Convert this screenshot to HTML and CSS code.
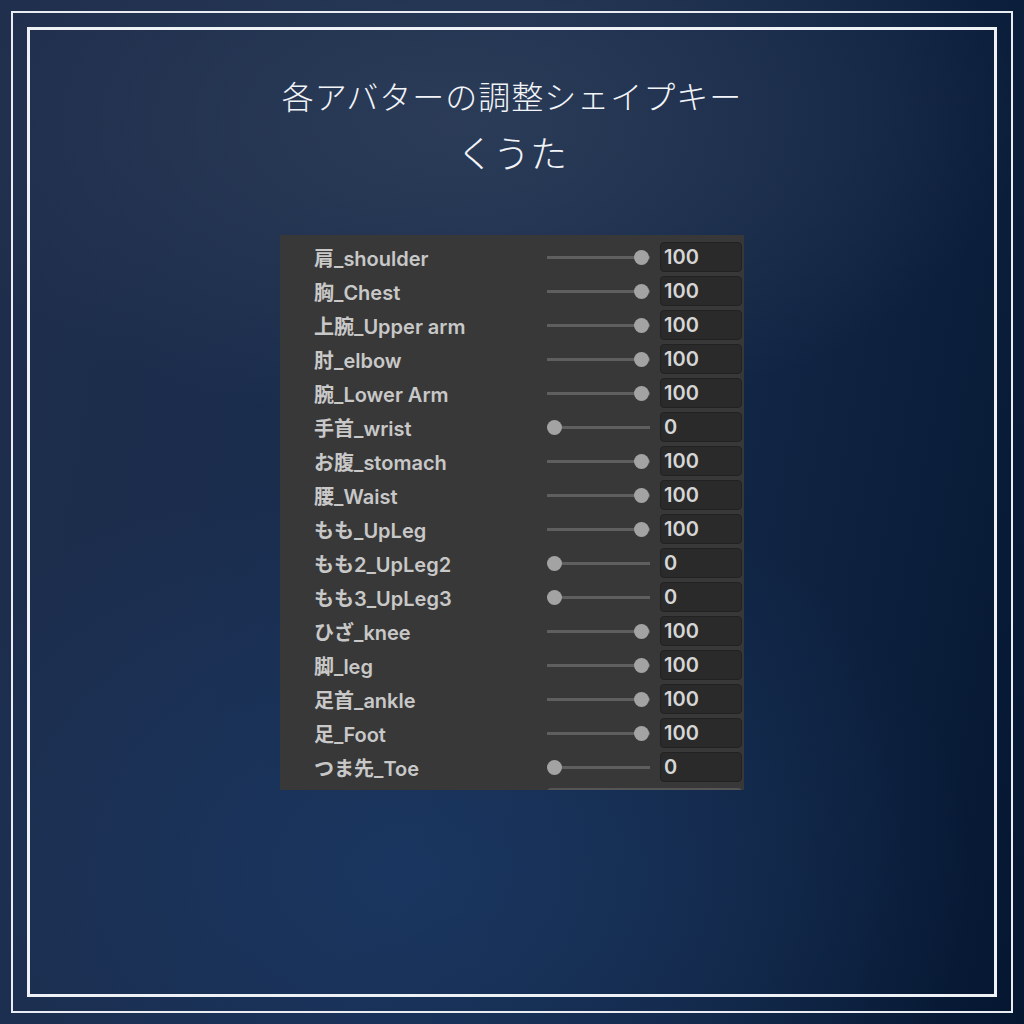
FILE: index.html
```html
<!DOCTYPE html>
<html lang="ja">
<head>
  <meta charset="UTF-8">
  <meta name="viewport" content="width=device-width, initial-scale=1.0">
  <title>各アバターの調整シェイプキー</title>
  <link rel="stylesheet" href="styles.css">
</head>
<body>
  <div class="outer">
    <div class="inner">
      <h1 class="title">各アバターの調整シェイプキー</h1>
      <h2 class="avatar">くうた</h2>

      <!-- blendshape list, cropped from the inspector -->
      <div class="panel">
        <div class="row"><span class="name">肩_shoulder</span><div class="slider max"><i></i></div><div class="field">100</div></div>
        <div class="row"><span class="name">胸_Chest</span><div class="slider max"><i></i></div><div class="field">100</div></div>
        <div class="row"><span class="name">上腕_Upper arm</span><div class="slider max"><i></i></div><div class="field">100</div></div>
        <div class="row"><span class="name">肘_elbow</span><div class="slider max"><i></i></div><div class="field">100</div></div>
        <div class="row"><span class="name">腕_Lower Arm</span><div class="slider max"><i></i></div><div class="field">100</div></div>
        <div class="row"><span class="name">手首_wrist</span><div class="slider"><i></i></div><div class="field">0</div></div>
        <div class="row"><span class="name">お腹_stomach</span><div class="slider max"><i></i></div><div class="field">100</div></div>
        <div class="row"><span class="name">腰_Waist</span><div class="slider max"><i></i></div><div class="field">100</div></div>
        <div class="row"><span class="name">もも_UpLeg</span><div class="slider max"><i></i></div><div class="field">100</div></div>
        <div class="row"><span class="name">もも2_UpLeg2</span><div class="slider"><i></i></div><div class="field">0</div></div>
        <div class="row"><span class="name">もも3_UpLeg3</span><div class="slider"><i></i></div><div class="field">0</div></div>
        <div class="row"><span class="name">ひざ_knee</span><div class="slider max"><i></i></div><div class="field">100</div></div>
        <div class="row"><span class="name">脚_leg</span><div class="slider max"><i></i></div><div class="field">100</div></div>
        <div class="row"><span class="name">足首_ankle</span><div class="slider max"><i></i></div><div class="field">100</div></div>
        <div class="row"><span class="name">足_Foot</span><div class="slider max"><i></i></div><div class="field">100</div></div>
        <div class="row"><span class="name">つま先_Toe</span><div class="slider"><i></i></div><div class="field">0</div></div>
        <div class="next"></div>
      </div>
    </div>
  </div>
</body>
</html>
```

FILE: styles.css
```css
html, body {
  margin: 0;
  height: 100%;
}
body {
  font-family: Inter, "Noto Sans CJK JP", sans-serif;
  padding: 11px;
  box-sizing: border-box;
  background:
    radial-gradient(ellipse 55% 30% at 45% 12%, rgba(48, 64, 90, 0.8) 0%, rgba(48, 64, 90, 0) 100%),
    radial-gradient(ellipse 55% 40% at 40% 85%, rgba(26, 56, 100, 0.8) 0%, rgba(26, 56, 100, 0) 100%),
    linear-gradient(100deg, #1e2d4b 0%, #182c4d 45%, #0f2341 75%, #041630 100%);
}
.outer {
  height: 100%;
  box-sizing: border-box;
  border: 2px solid #e9edf3;
  padding: 14px;
}
.inner {
  height: 100%;
  box-sizing: border-box;
  border: 3px solid #eef1f6;
  padding-top: 44px;
}
.title,
.avatar {
  margin: 0;
  text-align: center;
  color: #f2f4f8;
  font-family: "Noto Sans CJK JP", sans-serif;
  font-weight: 300;
}
.title {
  font-size: 32px;
  line-height: 42px;
  letter-spacing: 1px;
}
.avatar {
  font-size: 37px;
  line-height: 50px;
  margin-top: 11px;
}
.panel {
  width: 464px;
  margin: 58px auto 0;
  padding: 5px 0 0;
  height: 555px;
  box-sizing: border-box;
  background: #383838;
  overflow: hidden;
}
.row {
  display: grid;
  grid-template-columns: 233px 103px 92px;
  align-items: center;
  height: 34px;
  padding-left: 34px;
}
.name {
  color: #c8c8c8;
  font-size: 20px;
  font-weight: 600;
  white-space: nowrap;
}
.slider {
  display: flex;
  align-items: center;
  height: 16px;
  background: linear-gradient(#5f5f5f, #5f5f5f) 0 50% / 100% 3px no-repeat;
}
.slider.max {
  justify-content: flex-end;
  padding-right: 1px;
}
.slider i {
  width: 15px;
  height: 15px;
  border-radius: 50%;
  background: #a3a3a3;
}
.field {
  margin-left: 10px;
  height: 30px;
  box-sizing: border-box;
  border: 1px solid #222;
  border-radius: 4px;
  background: #2a2a2a;
  color: #d6d6d6;
  font-size: 20px;
  font-weight: 600;
  line-height: 28px;
  padding-left: 3px;
}
.next {
  margin: 4px 2px 0 267px;
  height: 4px;
  border-top: 2px solid #555;
  border-radius: 4px 4px 0 0;
  background: #2a2a2a;
}
```
